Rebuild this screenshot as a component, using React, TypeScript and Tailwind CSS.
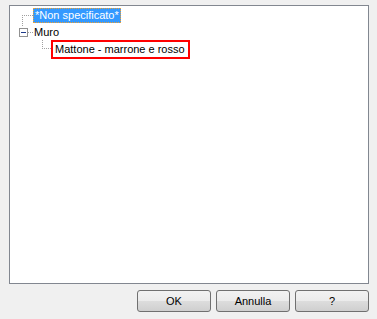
export default function App() {
  return (
    <div
      className="w-[377px] h-[319px] bg-[#f0f0f0] flex flex-col text-[11px] text-black whitespace-nowrap"
      style={{ fontFamily: "'Liberation Sans', Arial, sans-serif" }}
    >
      {/* Tree */}
      <div className="ml-[9px] mt-[5px] w-[360px] h-[279px] border border-[#828790] bg-white">
        <div className="pt-[2px]">
          {/* Non specificato */}
          <div className="flex items-center h-[15px]">
            <div className="w-[12px] ml-[12px] h-[15px] relative">
              <div className="absolute left-0 top-[7px] w-[11px] border-t border-dotted border-[#a0a0a0]" />
              <div className="absolute left-0 top-[7px] h-[11px] border-l border-dotted border-[#a0a0a0]" />
            </div>
            <span className="ml-[-1px] px-[1px] h-[15px] leading-[13px] bg-[#3399ff] text-white border border-dotted border-[#f0a030]">
              *Non specificato*
            </span>
          </div>
          {/* Muro */}
          <div className="flex items-center h-[17px] mt-[1px]">
            <div className="ml-[9px] w-[9px] h-[9px] border border-[#919191] bg-white flex items-center justify-center">
              <div className="w-[5px] h-px bg-[#1e3a8a]" />
            </div>
            <div className="w-[5px] border-t border-dotted border-[#a0a0a0]" />
            <span className="ml-[1px]">Muro</span>
          </div>
          {/* Mattone */}
          <div className="flex items-start h-[19px] -mt-[1px]">
            <div className="ml-[32px] w-[9px] h-[9px] border-l border-b border-dotted border-[#a0a0a0]" />
            <span className="border-2 border-[#ff0000] h-[19px] leading-[15px] px-[2px] w-[139px]">
              Mattone - marrone e rosso
            </span>
          </div>
        </div>
      </div>
      {/* Buttons */}
      <div className="flex justify-end gap-[5px] mt-[6px] mr-[8px]">
        {["OK", "Annulla", "?"].map((t) => (
          <button
            key={t}
            className="w-[74px] h-[22px] rounded-[3px] border border-[#707070] bg-[linear-gradient(#f2f2f2_0%,#ebebeb_50%,#dddddd_50%,#cfcfcf_100%)] text-[11px] text-black flex items-center justify-center"
          >
            {t}
          </button>
        ))}
      </div>
    </div>
  );
}
